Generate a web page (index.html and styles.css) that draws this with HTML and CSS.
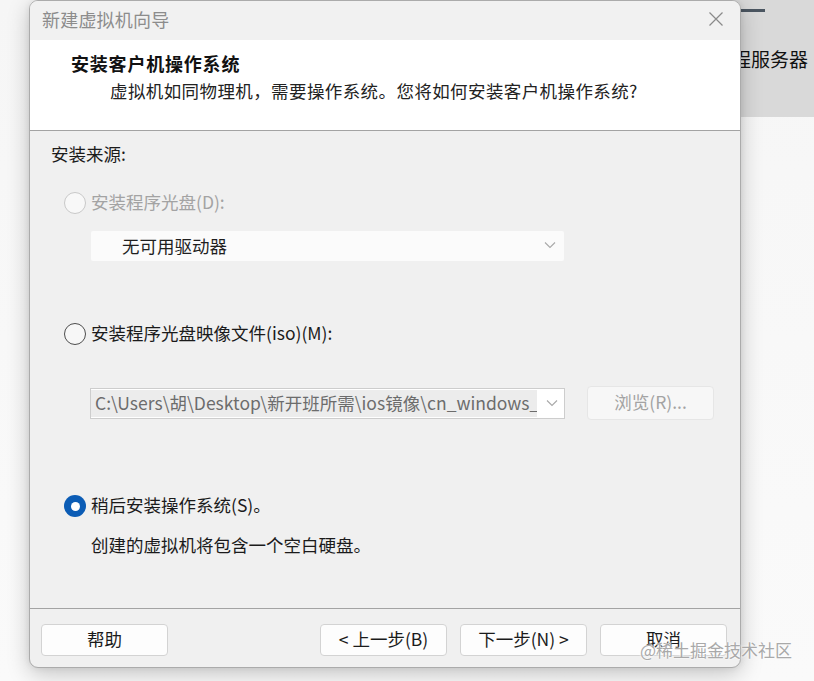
FILE: index.html
```html
<!DOCTYPE html>
<html lang="zh-CN">
<head>
<meta charset="utf-8">
<title>新建虚拟机向导</title>
<link rel="stylesheet" href="styles.css">
</head>
<body>
<div class="desktop">
  <div class="bgwin">
    <div class="bgwin-min"></div>
    <div class="bgwin-title">连接远程服务器</div>
  </div>

  <div class="dialog">
    <div class="titlebar">
      <span class="title">新建虚拟机向导</span>
      <svg class="close" width="16" height="16" viewBox="0 0 16 16"><path d="M1.5 1.5L14.5 14.5M14.5 1.5L1.5 14.5"/></svg>
    </div>

    <div class="header">
      <div class="h-title">安装客户机操作系统</div>
      <div class="h-sub">虚拟机如同物理机，需要操作系统。您将如何安装客户机操作系统?</div>
    </div>

    <div class="content">
      <div class="label">安装来源:</div>

      <div class="radio-row disabled row1">
        <span class="radio"></span>
        <span class="rtext">安装程序光盘(D):</span>
      </div>
      <div class="select">
        <span class="select-text">无可用驱动器</span>
        <svg class="chev" width="12" height="8" viewBox="0 0 12 8"><path d="M1 1.5L6 6.5L11 1.5"/></svg>
      </div>

      <div class="radio-row row2">
        <span class="radio"></span>
        <span class="rtext">安装程序光盘映像文件(iso)(M):</span>
      </div>
      <div class="iso-row">
        <div class="combo">
          <span class="combo-text">C:\Users\胡\Desktop\新开班所需\ios镜像\cn_windows_server</span>
          <span class="combo-btn"><svg class="chev" width="12" height="8" viewBox="0 0 12 8"><path d="M1 1.5L6 6.5L11 1.5"/></svg></span>
        </div>
        <div class="browse">浏览(R)...</div>
      </div>

      <div class="radio-row row3">
        <span class="radio checked"></span>
        <span class="rtext">稍后安装操作系统(S)。</span>
      </div>
      <div class="desc">创建的虚拟机将包含一个空白硬盘。</div>
    </div>

    <div class="footer">
      <div class="btn">帮助</div>
      <div class="btn-group">
        <div class="btn">&lt; 上一步(B)</div>
        <div class="btn">下一步(N) &gt;</div>
        <div class="btn">取消</div>
      </div>
    </div>
  </div>

  <div class="watermark">@稀土掘金技术社区</div>
</div>
</body>
</html>
```

FILE: styles.css
```css
* { box-sizing: border-box; }

html, body {
  margin: 0;
  padding: 0;
}

body {
  width: 814px;
  height: 681px;
  overflow: hidden;
  background: #f8f8f8;
  font-family: "Noto Sans CJK SC", "Noto Sans", sans-serif;
  color: #1b1b1b;
}

.desktop {
  position: relative;
  width: 814px;
  height: 681px;
  background: linear-gradient(to bottom, #f6f6f6, #fafafa);
}

/* background app window peeking out on the right */
.bgwin {
  position: absolute;
  left: 560px;
  top: 0;
  width: 254px;
  height: 117px;
  background: #d9d9d9;
}

.bgwin-min {
  position: absolute;
  left: 180px;
  top: 9px;
  width: 25px;
  height: 3px;
  background: #4b5661;
}

.bgwin-title {
  position: absolute;
  right: 6px;
  top: 45px;
  font-size: 19px;
  line-height: 28px;
  color: #111;
  white-space: nowrap;
}

/* dialog window */
.dialog {
  position: absolute;
  left: 29px;
  top: 0;
  width: 712px;
  height: 668px;
  border: 1px solid #ababab;
  border-radius: 9px;
  background: #f0f0f0;
  overflow: hidden;
  display: flex;
  flex-direction: column;
  box-shadow: 0 6px 22px rgba(0, 0, 0, 0.22), 0 0 6px rgba(0, 0, 0, 0.08);
}

.titlebar {
  height: 39px;
  flex: none;
  display: flex;
  align-items: center;
  justify-content: space-between;
  padding: 0 16px 3px 12px;
  background: #f1f1f1;
}

.title {
  font-size: 18px;
  color: #8c8c8c;
  letter-spacing: 0.2px;
}

.close {
  fill: none;
  stroke: #8a8a8a;
  stroke-width: 1.2;
}

.header {
  height: 91px;
  flex: none;
  background: #ffffff;
  border-bottom: 1px solid #a3a3a3;
  padding: 11px 0 0 41px;
}

.h-title {
  font-size: 18px;
  line-height: 24px;
  font-weight: 700;
  color: #111;
  letter-spacing: 0.8px;
}

.h-sub {
  margin: 4px 0 0 39px;
  font-size: 17.5px;
  line-height: 24px;
  color: #222;
  letter-spacing: 0.4px;
}

.content {
  height: 477px;
  flex: none;
  padding: 11px 0 0 21px;
  display: flex;
  flex-direction: column;
  align-items: flex-start;
  font-size: 17.5px;
}

.label {
  line-height: 24px;
  color: #1b1b1b;
}

.radio-row {
  display: flex;
  align-items: center;
  height: 24px;
  margin-left: 13px;
  gap: 5px;
  line-height: 24px;
  color: #1b1b1b;
}

.rtext {
  position: relative;
  top: -1px;
}

.row1 { margin-top: 25px; }
.row2 { margin-top: 61px; }
.row3 { margin-top: 74px; }

.radio {
  width: 22px;
  height: 22px;
  border-radius: 50%;
  border: 1.5px solid #4d4d4d;
  background: #f7f7f7;
  flex: none;
  display: flex;
  align-items: center;
  justify-content: center;
}

.disabled { color: #a3a3a3; }
.disabled .radio {
  border: 1.5px solid #c9c9c9;
  background: #f8f8f8;
}

.radio.checked {
  border: none;
  background: #0b5cb5;
}
.radio.checked::after {
  content: "";
  width: 9px;
  height: 9px;
  border-radius: 50%;
  background: #ffffff;
}

.select {
  margin: 16px 0 0 40px;
  width: 473px;
  height: 30px;
  background: #fbfbfb;
  display: flex;
  align-items: center;
  justify-content: space-between;
  padding: 0 8px 2px 31px;
  border-radius: 2px;
}

.select-text {
  color: #1f1f1f;
}

.chev {
  fill: none;
  stroke: #a8a8a8;
  stroke-width: 1.1;
}

.iso-row {
  margin: 40px 0 0 39px;
  display: flex;
  align-items: center;
  gap: 22px;
}

.combo {
  width: 475px;
  height: 31px;
  border: 1px solid #cdcdcd;
  background: #ffffff;
  display: flex;
  align-items: stretch;
}

.combo-text {
  width: 446px;
  background: #ececec;
  color: #6c6c6c;
  white-space: nowrap;
  overflow: hidden;
  padding-left: 4px;
  line-height: 25px;
  margin: 1px 0;
}

.combo-btn {
  flex: 1;
  display: flex;
  align-items: center;
  justify-content: center;
  padding-left: 2px;
}

.browse {
  width: 127px;
  height: 34px;
  border: 1px solid #e6e6e6;
  border-radius: 4px;
  background: #f7f7f7;
  color: #a3a3a3;
  display: flex;
  align-items: center;
  justify-content: center;
  padding-bottom: 3px;
}

.desc {
  margin: 15px 0 0 40px;
  line-height: 24px;
  color: #1b1b1b;
}

.footer {
  flex: 1;
  border-top: 1px solid #a3a3a3;
  padding: 15px 13px 0 11px;
  display: flex;
  justify-content: space-between;
  align-items: flex-start;
}

.btn-group {
  display: flex;
  gap: 13px;
}

.btn {
  width: 127px;
  height: 32px;
  border: 1px solid #d3d3d3;
  border-radius: 4px;
  background: #fdfdfd;
  display: flex;
  align-items: center;
  justify-content: center;
  padding-bottom: 3px;
  font-size: 17.5px;
  color: #1b1b1b;
}

.watermark {
  position: absolute;
  left: 640px;
  top: 638px;
  font-size: 17px;
  line-height: 24px;
  color: #a9a9a9;
  white-space: nowrap;
  text-shadow: 0 0 2px #ffffff, 0 0 2px #ffffff;
}
```
